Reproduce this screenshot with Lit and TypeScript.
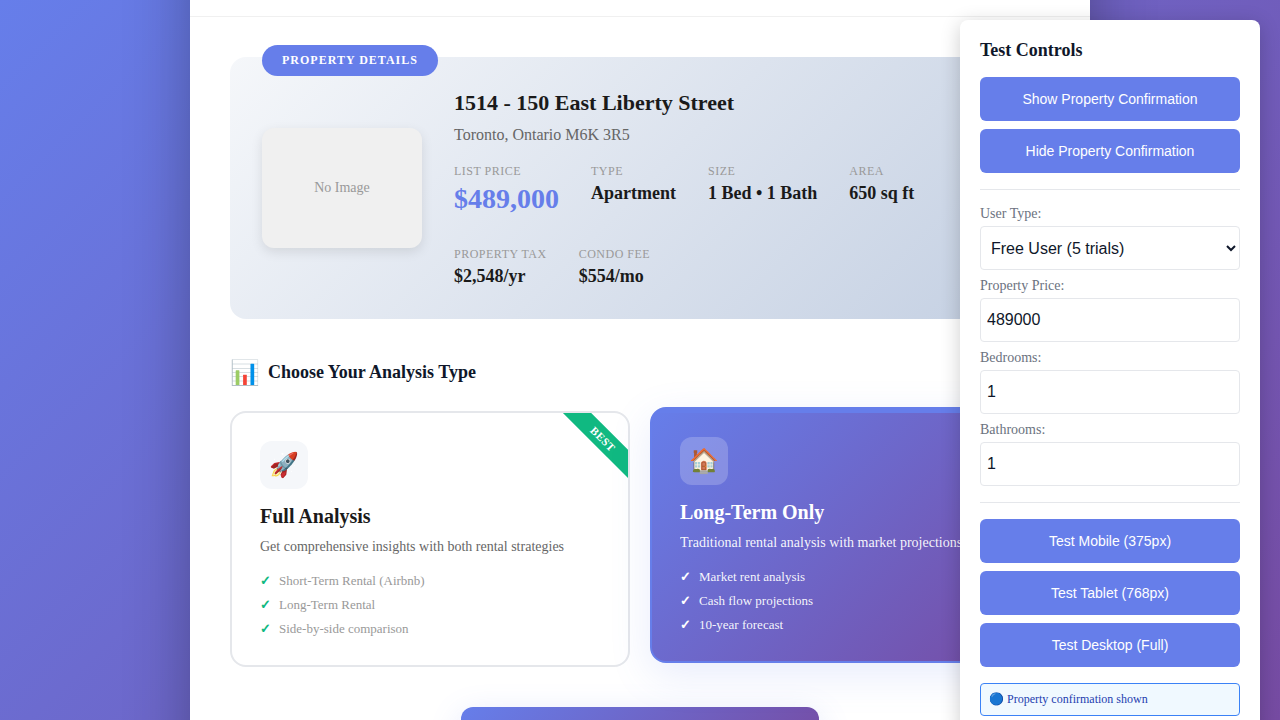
import { LitElement, html, css } from "lit";
import { customElement } from "lit/decorators.js";
import { classMap } from "lit/directives/class-map.js";

interface Detail { label: string; value: string; price?: boolean }
interface Plan { icon: string; title: string; desc: string; features: string[]; selected?: boolean; ribbon?: string }

const details: Detail[] = [
  { label: "List Price", value: "$489,000", price: true },
  { label: "Type", value: "Apartment" },
  { label: "Size", value: "1 Bed • 1 Bath" },
  { label: "Area", value: "650 sq ft" },
  { label: "Property Tax", value: "$2,548/yr" },
  { label: "Condo Fee", value: "$554/mo" },
];

const plans: Plan[] = [
  {
    icon: "🚀", title: "Full Analysis", ribbon: "Best",
    desc: "Get comprehensive insights with both rental strategies",
    features: ["Short-Term Rental (Airbnb)", "Long-Term Rental", "Side-by-side comparison"],
  },
  {
    icon: "🏠", title: "Long-Term Only", selected: true,
    desc: "Traditional rental analysis with market projections",
    features: ["Market rent analysis", "Cash flow projections", "10-year forecast"],
  },
];

@customElement("property-summary")
export class PropertySummary extends LitElement {
  static styles = css`
    :host { display: block; }
    * { box-sizing: border-box; }
    .card {
      position: relative; display: grid; grid-template-columns: 160px 1fr; gap: 32px;
      align-items: center; height: 262px; padding: 32px; border-radius: 16px;
      background: linear-gradient(135deg, #f5f7fa 0%, #c3cfe2 100%);
    }
    .badge {
      position: absolute; top: -12px; left: 32px; height: 31px; padding: 8px 20px;
      border-radius: 20px; background: #667eea; color: #fff; font-size: 12px;
      line-height: 15px; font-weight: 600; letter-spacing: 1px; text-transform: uppercase;
    }
    .image {
      height: 120px; border-radius: 12px; background: #f0f0f0; color: #999; font-size: 14px;
      display: flex; align-items: center; justify-content: center;
      box-shadow: 0 4px 12px rgba(0, 0, 0, 0.1);
    }
    h2 { margin: 0 0 8px; font-size: 22px; line-height: 28px; font-weight: 600; color: #1a1a1a; }
    .place { margin-bottom: 19px; font-size: 16px; line-height: 20px; color: #666; }
    .details { display: flex; flex-wrap: wrap; gap: 32px; }
    .label {
      margin-bottom: 5px; font-size: 12px; line-height: 14px; letter-spacing: 0.5px;
      text-transform: uppercase; color: #999;
    }
    .value { font-size: 18px; line-height: 21px; font-weight: 600; color: #1a1a1a; }
    .price {
      padding-bottom: 1px; font-size: 28px; line-height: 31px; font-weight: 700; color: #667eea;
    }
  `;

  render() {
    return html`
      <section class="card">
        <span class="badge">Property Details</span>
        <div class="image">No Image</div>
        <div>
          <h2>1514 - 150 East Liberty Street</h2>
          <div class="place">Toronto, Ontario M6K 3R5</div>
          <div class="details">
            ${details.map((d) => html`
              <div>
                <div class="label">${d.label}</div>
                <div class=${classMap({ value: true, price: !!d.price })}>${d.value}</div>
              </div>`)}
          </div>
        </div>
      </section>`;
  }
}

@customElement("plan-picker")
export class PlanPicker extends LitElement {
  static styles = css`
    :host { display: block; }
    * { box-sizing: border-box; }
    .heading {
      display: flex; align-items: center; gap: 8px; height: 32px; margin: 0 0 23px;
      font-size: 18px; line-height: 21px; font-weight: 600; color: #0f172a;
    }
    .emoji { padding-top: 2px; font-size: 24px; font-weight: 400; line-height: 32px; }
    .plans { display: grid; grid-template-columns: 1fr 1fr; gap: 20px; }
    .plan {
      position: relative; overflow: hidden; height: 256px; padding: 28px;
      border: 2px solid #e5e7eb; border-radius: 16px; background: #fff;
    }
    .selected {
      border-color: #667eea; color: #fff; transform: translateY(-4px);
      background: linear-gradient(135deg, #667eea 0%, #764ba2 100%);
      box-shadow: 0 12px 40px rgba(102, 126, 234, 0.15);
    }
    .selected::before {
      content: ""; position: absolute; top: 0; left: 0; right: 0; height: 4px; background: #667eea;
    }
    .ribbon {
      position: absolute; top: 16px; right: -30px; padding: 4px 40px; transform: rotate(45deg);
      background: #10b981; color: #fff; font-size: 11px; line-height: 12px; font-weight: 700;
      letter-spacing: 0.5px; text-transform: uppercase;
    }
    .icon {
      display: flex; align-items: center; justify-content: center; width: 48px; height: 48px;
      margin-bottom: 16px; border-radius: 12px; background: #f5f7fa; font-size: 24px;
    }
    .selected .icon { background: rgba(255, 255, 255, 0.2); }
    h3 { margin: 0 0 9px; font-size: 20px; line-height: 23px; font-weight: 600; color: #1a1a1a; }
    p { margin: 0 0 12px; font-size: 14px; line-height: 20px; color: #666; white-space: nowrap; }
    ul { margin: 0; padding: 0; list-style: none; }
    li { display: flex; align-items: center; gap: 8px; height: 24px; font-size: 13px; color: #999; }
    li::before { content: "✓"; color: #10b981; font-weight: 700; }
    .selected h3, .selected li::before { color: #fff; }
    .selected p, .selected li { color: rgba(255, 255, 255, 0.95); }
  `;

  render() {
    return html`
      <h3 class="heading"><span class="emoji">📊</span>Choose Your Analysis Type</h3>
      <div class="plans">
        ${plans.map((p) => html`
          <article class=${classMap({ plan: true, selected: !!p.selected })}>
            ${p.ribbon ? html`<span class="ribbon">${p.ribbon}</span>` : null}
            <div class="icon">${p.icon}</div>
            <h3>${p.title}</h3>
            <p>${p.desc}</p>
            <ul>${p.features.map((f) => html`<li>${f}</li>`)}</ul>
          </article>`)}
      </div>`;
  }
}

@customElement("test-controls")
export class TestControls extends LitElement {
  static styles = css`
    :host {
      display: block; box-sizing: border-box; width: 300px; padding: 20px; border-radius: 8px;
      background: #fff; box-shadow: 0 4px 20px rgba(0, 0, 0, 0.2); color: #0f172a;
    }
    * { box-sizing: border-box; }
    h3 { margin: 0 0 16px; font-size: 18px; line-height: 21px; font-weight: 600; }
    button {
      display: block; width: 100%; height: 44px; margin: 0 0 8px; padding: 0; border: 0;
      border-radius: 6px; background: #667eea; color: #fff;
      font: 14px "Liberation Sans", Arial, sans-serif;
    }
    hr { height: 1px; margin: 16px 0; border: 0; background: #e5e7eb; }
    label { display: block; height: 20px; font-size: 14px; line-height: 16px; color: #6b7280; }
    input, select {
      display: block; width: 100%; height: 44px; margin: 0 0 8px; padding: 6px;
      border: 1px solid #e5e7eb; border-radius: 4px; background: #fff; color: #0f172a;
      font: 16px "Liberation Sans", Arial, sans-serif;
    }
    .status {
      display: flex; align-items: center; height: 33px; margin-top: 16px; padding: 0 8px;
      border: 1px solid #3b82f6; border-radius: 4px; background: #f0f9ff; color: #1e40af;
      font-size: 12px; white-space: pre;
    }
  `;

  render() {
    return html`
      <h3>Test Controls</h3>
      <button>Show Property Confirmation</button>
      <button>Hide Property Confirmation</button>
      <hr />
      <label>User Type:</label>
      <select><option>Free User (5 trials)</option></select>
      <label>Property Price:</label>
      <input value="489000" />
      <label>Bedrooms:</label>
      <input value="1" />
      <label>Bathrooms:</label>
      <input value="1" />
      <hr />
      <button>Test Mobile (375px)</button>
      <button>Test Tablet (768px)</button>
      <button>Test Desktop (Full)</button>
      <div class="status">🔵 Property confirmation shown</div>`;
  }
}

@customElement("app-root")
export class AppRoot extends LitElement {
  static styles = css`
    :host {
      position: relative; display: block; height: 720px; overflow: hidden;
      background: linear-gradient(135deg, #667eea 0%, #764ba2 100%);
      font-family: "Liberation Serif", "Times New Roman", serif;
    }
    .modal {
      box-sizing: border-box; width: 900px; height: 1000px; margin: -100px auto 0;
      background: #fff; box-shadow: 0 20px 60px rgba(0, 0, 0, 0.3);
    }
    .header { height: 116px; border-bottom: 1px solid #f0f0f0; }
    .body { padding: 40px; }
    .picker { margin-top: 37px; }
    .actions { display: flex; justify-content: center; margin-top: 40px; }
    .submit {
      width: 358px; height: 56px; border-radius: 12px;
      background: linear-gradient(135deg, #667eea 0%, #764ba2 100%);
      box-shadow: 0 8px 32px rgba(102, 126, 234, 0.2);
    }
    .controls { position: absolute; top: 20px; right: 20px; z-index: 2; }
  `;

  render() {
    return html`
      <main class="modal">
        <div class="header"></div>
        <div class="body">
          <property-summary></property-summary>
          <plan-picker class="picker"></plan-picker>
          <div class="actions"><div class="submit"></div></div>
        </div>
      </main>
      <test-controls class="controls"></test-controls>`;
  }
}
